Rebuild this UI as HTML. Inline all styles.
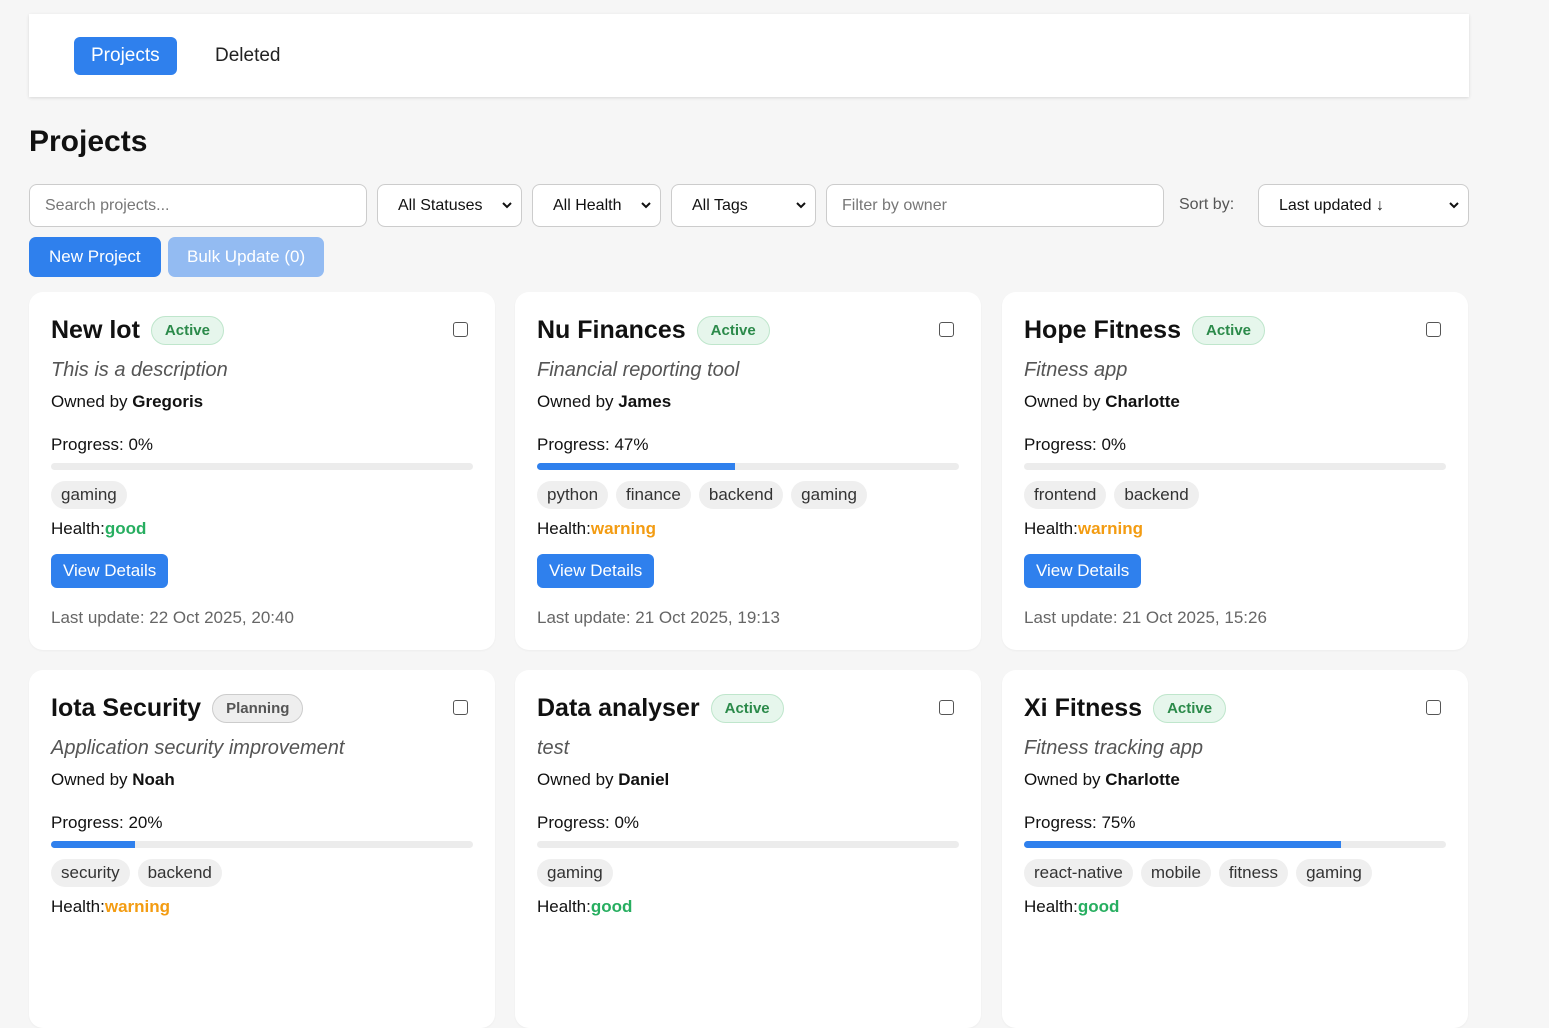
<!DOCTYPE html>
<html><head><meta charset="utf-8"><style>
*{box-sizing:border-box;margin:0;padding:0}
body{width:1549px;height:931px;overflow:hidden;background:#f6f6f6;font-family:"Liberation Sans",sans-serif;color:#111;position:relative}
.nav{position:absolute;left:29px;top:14px;width:1440px;height:83px;background:#fff;box-shadow:0 1px 3px rgba(0,0,0,.12)}
.tab{position:absolute;top:23px;height:38px;line-height:38px;font-size:19px;padding:0 16px;border-radius:6px}
.tab.a{left:45px;background:#2f80ed;color:#fff;padding:0 17px}
.tab.b{left:170px;color:#222}
h1{position:absolute;left:29px;top:125px;font-size:30px;font-weight:bold}
.in{position:absolute;top:184px;height:43px;border:1px solid #ccc;border-radius:8px;background:#fff;font-size:16px;line-height:41px;padding-left:15px;color:#777}
.sel{color:#111;padding-left:20px}
.sel svg{position:absolute;right:8px;top:15px}
.sort{position:absolute;left:1179px;top:196px;font-size:16px;color:#555}
.btn{position:absolute;top:237px;height:40px;line-height:40px;border-radius:7px;font-size:17px;color:#fff;padding:0 20px}
.card{position:absolute;width:466px;height:358px;background:#fff;border-radius:14px;padding:0 22px;box-shadow:0 1px 2px rgba(0,0,0,.04)}
.t{position:absolute;left:22px;top:24px;font-size:25px;font-weight:bold;display:flex;align-items:center;gap:11px}
.badge{font-size:15px;font-weight:bold;color:#2b8a4a;background:#e6f6ec;border:1px solid #bfe6cc;border-radius:16px;padding:5px 13px}
.badge.p{color:#555;background:#eee;border-color:#ccc}
.cb{position:absolute;right:27px;top:30px;width:15px;height:15px;border:1.5px solid #555;border-radius:3px}
.d{position:absolute;left:22px;top:67px;font-size:20px;font-style:italic;color:#555}
.o{position:absolute;left:22px;top:100px;font-size:17px}
.pg{position:absolute;left:22px;top:143px;font-size:17px}
.bar{position:absolute;left:22px;top:171px;width:422px;height:7px;background:#ececec;border-radius:4px;overflow:hidden}
.bar i{display:block;height:100%;background:#2f80ed}
.tags{position:absolute;left:22px;top:189px;display:flex;gap:8px}
.tags span{background:#efefef;border-radius:14px;font-size:17px;padding:0 10px;height:28px;line-height:28px;color:#333}
.h{position:absolute;left:22px;top:227px;font-size:17px}
.g{color:#27ae60;font-weight:bold}.w{color:#f39c12;font-weight:bold}
.vd{position:absolute;left:22px;top:262px;height:34px;line-height:34px;background:#2f80ed;color:#fff;font-size:17px;padding:0 12px;border-radius:6px}
.lu{position:absolute;left:22px;top:316px;font-size:17px;color:#666}
</style></head><body>
<div class="nav"><div class="tab a">Projects</div><div class="tab b">Deleted</div></div>
<h1>Projects</h1>
<div class="in" style="left:29px;width:338px">Search projects...</div>
<div class="in sel" style="left:377px;width:145px">All Statuses<svg width="12" height="10" viewBox="0 0 12 10"><path d="M2 3l4 4 4-4" stroke="#111" stroke-width="2" fill="none"/></svg></div>
<div class="in sel" style="left:532px;width:129px">All Health<svg width="12" height="10" viewBox="0 0 12 10"><path d="M2 3l4 4 4-4" stroke="#111" stroke-width="2" fill="none"/></svg></div>
<div class="in sel" style="left:671px;width:145px">All Tags<svg width="12" height="10" viewBox="0 0 12 10"><path d="M2 3l4 4 4-4" stroke="#111" stroke-width="2" fill="none"/></svg></div>
<div class="in" style="left:826px;width:338px">Filter by owner</div>
<div class="sort">Sort by:</div>
<div class="in sel" style="left:1258px;width:211px">Last updated ↓<svg width="12" height="10" viewBox="0 0 12 10"><path d="M2 3l4 4 4-4" stroke="#111" stroke-width="2" fill="none"/></svg></div>
<div class="btn" style="left:29px;background:#2f80ed">New Project</div>
<div class="btn" style="left:168px;background:#93bbf2;padding:0 19px">Bulk Update (0)</div>

<div class="card" style="left:29px;top:292px"><div class="t">New lot<span class="badge">Active</span></div><div class="cb"></div>
<div class="d">This is a description</div><div class="o">Owned by <b>Gregoris</b></div><div class="pg">Progress: 0%</div><div class="bar"><i style="width:0"></i></div>
<div class="tags"><span>gaming</span></div><div class="h">Health:<span class="g">good</span></div><div class="vd">View Details</div><div class="lu">Last update: 22 Oct 2025, 20:40</div></div>

<div class="card" style="left:515px;top:292px"><div class="t">Nu Finances<span class="badge">Active</span></div><div class="cb"></div>
<div class="d">Financial reporting tool</div><div class="o">Owned by <b>James</b></div><div class="pg">Progress: 47%</div><div class="bar"><i style="width:47%"></i></div>
<div class="tags"><span>python</span><span>finance</span><span>backend</span><span>gaming</span></div><div class="h">Health:<span class="w">warning</span></div><div class="vd">View Details</div><div class="lu">Last update: 21 Oct 2025, 19:13</div></div>

<div class="card" style="left:1002px;top:292px"><div class="t">Hope Fitness<span class="badge">Active</span></div><div class="cb"></div>
<div class="d">Fitness app</div><div class="o">Owned by <b>Charlotte</b></div><div class="pg">Progress: 0%</div><div class="bar"><i style="width:0"></i></div>
<div class="tags"><span>frontend</span><span>backend</span></div><div class="h">Health:<span class="w">warning</span></div><div class="vd">View Details</div><div class="lu">Last update: 21 Oct 2025, 15:26</div></div>

<div class="card" style="left:29px;top:670px"><div class="t">Iota Security<span class="badge p">Planning</span></div><div class="cb"></div>
<div class="d">Application security improvement</div><div class="o">Owned by <b>Noah</b></div><div class="pg">Progress: 20%</div><div class="bar"><i style="width:20%"></i></div>
<div class="tags"><span>security</span><span>backend</span></div><div class="h">Health:<span class="w">warning</span></div></div>

<div class="card" style="left:515px;top:670px"><div class="t">Data analyser<span class="badge">Active</span></div><div class="cb"></div>
<div class="d">test</div><div class="o">Owned by <b>Daniel</b></div><div class="pg">Progress: 0%</div><div class="bar"><i style="width:0"></i></div>
<div class="tags"><span>gaming</span></div><div class="h">Health:<span class="g">good</span></div></div>

<div class="card" style="left:1002px;top:670px"><div class="t">Xi Fitness<span class="badge">Active</span></div><div class="cb"></div>
<div class="d">Fitness tracking app</div><div class="o">Owned by <b>Charlotte</b></div><div class="pg">Progress: 75%</div><div class="bar"><i style="width:75%"></i></div>
<div class="tags"><span>react-native</span><span>mobile</span><span>fitness</span><span>gaming</span></div><div class="h">Health:<span class="g">good</span></div></div>
</body></html>
